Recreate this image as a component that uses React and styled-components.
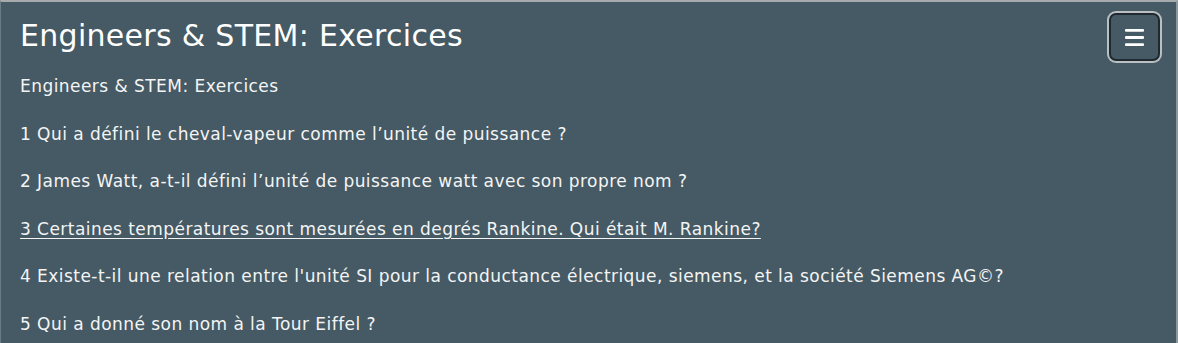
import styled, { createGlobalStyle } from 'styled-components'

const Global = createGlobalStyle`
  html, body {
    margin: 0;
    padding: 0;
    background: #455a64;
  }
  body {
    font-family: 'DejaVu Sans', sans-serif;
    color: #fff;
  }
`

const Page = styled.div`
  box-sizing: border-box;
  width: 1178px;
  height: 343px;
  overflow: hidden;
  background: #455a64;
  border-top: 2px solid #a7aaac;
  border-left: 1px solid #6b7c84;
  border-right: 2px solid #8d989d;
  padding: 0 16px 0 19px;
`

const Header = styled.div`
  display: flex;
  justify-content: space-between;
  align-items: flex-start;
  height: 74px;
`

const Title = styled.h1`
  margin: 0;
  padding-top: 16px;
  font-size: 30px;
  font-weight: 400;
  line-height: 36px;
  letter-spacing: 0.3px;
`

const MenuButton = styled.button`
  margin-top: 11px;
  width: 51px;
  height: 48px;
  box-sizing: border-box;
  border-radius: 7px;
  border: 2px solid #1f2a30;
  box-shadow: 0 0 0 2px #b9bfc2;
  background: #455a64;
  color: #fff;
  display: flex;
  align-items: center;
  justify-content: center;
  padding: 0;
`

const Lines = styled.div`
  display: flex;
  flex-direction: column;
`

const Line = styled.p`
  margin: 0;
  height: 47.6px;
  line-height: 20px;
  font-size: 17px;
  letter-spacing: 0.45px;
  color: #f4f4f4;
  text-decoration: ${p => (p.$link ? 'underline' : 'none')};
  text-underline-offset: 3px;
`

const items = [
  'Engineers & STEM: Exercices',
  '1 Qui a défini le cheval-vapeur comme l’unité de puissance ?',
  '2 James Watt, a-t-il défini l’unité de puissance watt avec son propre nom ?',
  '3 Certaines températures sont mesurées en degrés Rankine. Qui était M. Rankine?',
  "4 Existe-t-il une relation entre l'unité SI pour la conductance électrique, siemens, et la société Siemens AG©?",
  '5 Qui a donné son nom à la Tour Eiffel ?',
]

export default function App() {
  return (
    <>
      <Global />
      <Page>
        <Header>
          <Title>Engineers &amp; STEM: Exercices</Title>
          <MenuButton aria-label="menu">
            <svg width="19" height="17" viewBox="0 0 19 17">
              <rect x="0" y="0" width="19" height="2.8" rx="1" fill="#fff" />
              <rect x="0" y="7.1" width="19" height="2.8" rx="1" fill="#fff" />
              <rect x="0" y="14.2" width="19" height="2.8" rx="1" fill="#fff" />
            </svg>
          </MenuButton>
        </Header>
        <Lines>
          {items.map((t, i) => (
            <Line key={i} $link={i === 3}>{t}</Line>
          ))}
        </Lines>
      </Page>
    </>
  )
}
